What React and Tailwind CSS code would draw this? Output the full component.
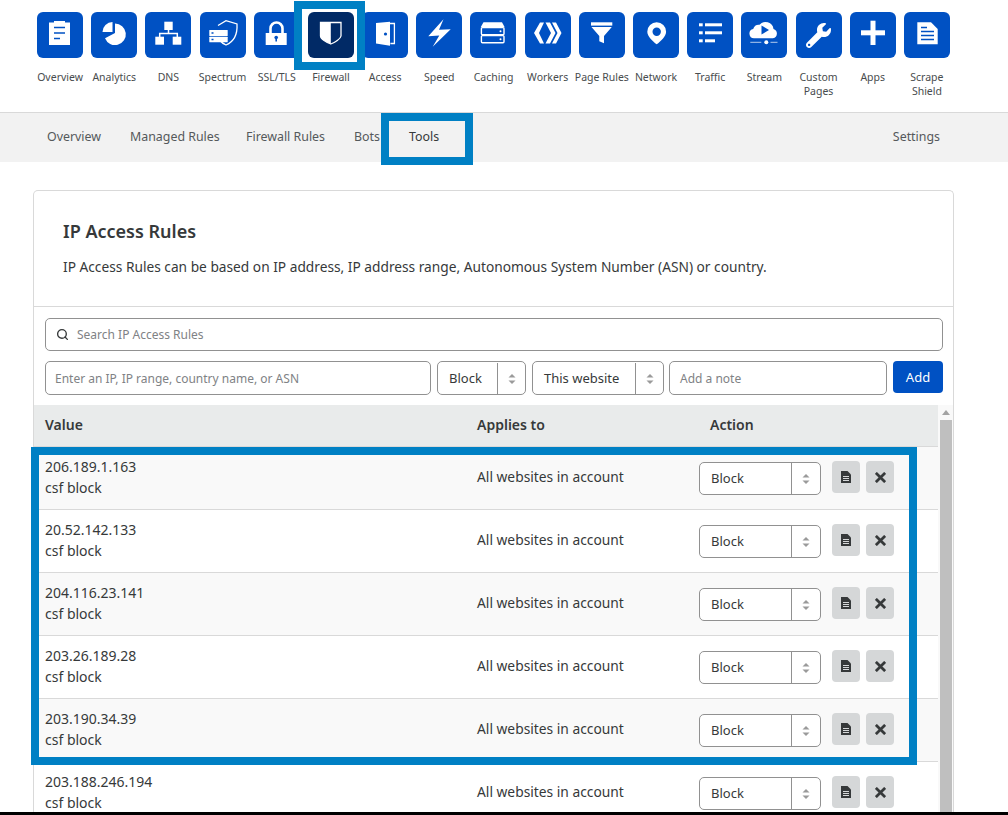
import React from 'react'
import { Search } from 'lucide-react'
import { FaWrench } from 'react-icons/fa'

const blue = '#0051c3'

function Glyph({ children }) {
  return (
    <svg viewBox="0 0 46 46" className="w-[46px] h-[46px]" fill="#fff">
      {children}
    </svg>
  )
}

const tabs = [
  {
    label: 'Overview',
    icon: (
      <Glyph>
        <rect x="12" y="10.5" width="21" height="22.5" />
        <rect x="17" y="9" width="11" height="3" />
        <path d="M17 15.500h11M17 21h11M17 26.500h6" stroke={blue} strokeWidth="1.600" />
      </Glyph>
    ),
  },
  {
    label: 'Analytics',
    icon: (
      <Glyph>
        <path d="M24 11.500A10.800 10.800 0 1 1 14 26.300L24 21z" />
        <path d="M21.500 10v10h-10A10 10 0 0 1 21.500 10z" />
      </Glyph>
    ),
  },
  {
    label: 'DNS',
    icon: (
      <Glyph>
        <rect x="19.300" y="9.700" width="8.400" height="8.300" />
        <rect x="10.300" y="24.700" width="8.700" height="8" />
        <rect x="27.700" y="24.700" width="8.600" height="8" />
        <path d="M23.500 18v3.500M14.700 25v-3.500h17.600V25" fill="none" stroke="#fff" strokeWidth="1.500" />
      </Glyph>
    ),
  },
  {
    label: 'Spectrum',
    icon: (
      <Glyph>
        <path d="M18 13.500L26 8.700l11 3.300c.5 9-1.500 17-11 21-2.500-1-4.500-2.500-6-4.500" fill="none" stroke="#fff" strokeWidth="1.300" />
        <rect x="9.300" y="18" width="18.400" height="6" rx=".5" />
        <rect x="9.300" y="24.800" width="18.400" height="5.500" rx=".5" />
        <path d="M11.500 21h2M11.500 27.500h2" stroke={blue} strokeWidth="1.300" />
      </Glyph>
    ),
  },
  {
    label: 'SSL/TLS',
    icon: (
      <Glyph>
        <path d="M16.500 21.500v-5a6 6 0 0 1 12 0v5" fill="none" stroke="#fff" strokeWidth="2.600" />
        <rect x="11.700" y="21" width="21" height="12" />
        <circle cx="22.200" cy="25.500" r="1.800" fill={blue} />
        <rect x="21.400" y="26" width="1.600" height="3.500" fill={blue} />
      </Glyph>
    ),
  },
  {
    label: 'Firewall',
    active: true,
    icon: (
      <Glyph>
        <path d="M12.500 10.500h20.500v13.500c-.5 3-6 6.500-10.200 8-4.300-1.500-10.300-5-10.300-8z" fill="none" stroke="#fff" strokeWidth="1.300" />
        <path d="M12.500 10.500h10.300v21.500c-4.300-1.500-10.300-5-10.300-8z" />
      </Glyph>
    ),
  },
  {
    label: 'Access',
    icon: (
      <Glyph>
        <path d="M25 11.500h7.400v20h-4" fill="none" stroke="#fff" strokeWidth="1.300" />
        <path d="M14 11l14-1.300v24L14 31.500z" />
        <circle cx="23.500" cy="22" r="1.600" fill={blue} />
      </Glyph>
    ),
  },
  {
    label: 'Speed',
    icon: (
      <Glyph>
        <path d="M27.500 7.300L12.300 24.300l11-.8L16.700 34.700l18-17.500-11.700.5z" />
      </Glyph>
    ),
  },
  {
    label: 'Caching',
    icon: (
      <Glyph>
        <path d="M13.500 10.300h18.500l2.700 5H10.700z" />
        <rect x="11.400" y="15.600" width="22.600" height="7.200" rx="1" fill="none" stroke="#fff" strokeWidth="1.400" />
        <rect x="11.400" y="23.600" width="22.600" height="7.200" rx="1" fill="none" stroke="#fff" strokeWidth="1.400" />
        <circle cx="30.500" cy="19.200" r="1" />
        <circle cx="30.500" cy="27.200" r="1" />
      </Glyph>
    ),
  },
  {
    label: 'Workers',
    icon: (
      <Glyph>
        <path d="M9 21l6-10.500h4L14 21l5 10.500h-4z" />
        <path d="M20.500 10.500H25L30.500 21 25 31.500h-4.500L26 21z" />
        <path d="M27 10.500h4L36.500 21 31 31.500h-4L32.500 21z" />
      </Glyph>
    ),
  },
  {
    label: 'Page Rules',
    icon: (
      <Glyph>
        <rect x="12" y="10.300" width="21.300" height="3.300" />
        <path d="M12.500 15h20.300l-7.800 9v7.300l-4.700-2V24z" />
      </Glyph>
    ),
  },
  {
    label: 'Network',
    icon: (
      <Glyph>
        <path fillRule="evenodd" d="M23.700 10.300a9.400 9.400 0 0 1 9.400 9.400c0 4.500-5.600 9.800-9.400 12.600-3.800-2.800-9.400-8.100-9.400-12.600a9.400 9.400 0 0 1 9.400-9.400zm0 5.200a4.200 4.200 0 1 0 0 8.400 4.200 4.200 0 0 0 0-8.400z" />
      </Glyph>
    ),
  },
  {
    label: 'Traffic',
    icon: (
      <Glyph>
        <rect x="12" y="11.300" width="3.700" height="3" />
        <rect x="18" y="11.300" width="17" height="3" />
        <rect x="12" y="19.300" width="3.700" height="3" />
        <rect x="18" y="19.300" width="17" height="3" />
        <rect x="12" y="27.300" width="3.700" height="3" />
        <rect x="18" y="27.300" width="10" height="3" />
      </Glyph>
    ),
  },
  {
    label: 'Stream',
    icon: (
      <Glyph>
        <path d="M13 26.300a4.700 4.700 0 0 1-.8-9.300 6 6 0 0 1 6.300-4.200A8 8 0 0 1 32.500 17a4.800 4.800 0 0 1-.5 9.300z" />
        <path d="M20.500 13.500v9l7.500-4.500z" fill={blue} />
        <path d="M9.300 30.300h11M29.500 30.300h7" stroke="#fff" strokeOpacity=".7" strokeWidth="1" />
        <circle cx="25.300" cy="30.300" r="2" />
      </Glyph>
    ),
  },
  {
    label: 'Custom Pages',
    icon: (
      <div className="flex items-center justify-center w-[46px] h-[46px] text-white">
        <FaWrench size={25} />
      </div>
    ),
  },
  {
    label: 'Apps',
    icon: (
      <Glyph>
        <rect x="20.500" y="8.700" width="5" height="24.300" />
        <rect x="11" y="18.300" width="24" height="5" />
      </Glyph>
    ),
  },
  {
    label: 'Scrape Shield',
    icon: (
      <Glyph>
        <path d="M13.300 10.300h13.700l6.700 6.700v15.300H13.300z" />
        <path d="M17 19.500h13M17 23.500h13M17 27.500h13M17 15.500h6" stroke={blue} strokeWidth="1.500" />
      </Glyph>
    ),
  },
]

const subTabs = [
  { label: 'Overview', width: 'w-[83px]' },
  { label: 'Managed Rules', width: 'w-[116px]' },
  { label: 'Firewall Rules', width: 'w-[108px]' },
  { label: 'Bots', width: 'w-[55px]' },
]

const rules = ['206.189.1.163', '20.52.142.133', '204.116.23.141', '203.26.189.28', '203.190.34.39', '203.188.246.194']

function Stepper() {
  return (
    <svg viewBox="0 0 8 12" className="w-[8px] h-[12px]" fill="#9a9a9a">
      <path d="M4 1L7.500 4.500H.5z" />
      <path d="M4 11L.5 7.500h7z" />
    </svg>
  )
}

function SelectBox({ label, className, labelWidth }) {
  return (
    <div className={`flex items-stretch bg-white border border-[#919191] rounded-[5px] text-[13px] text-[#36393a] ${className}`}>
      <div className={`flex items-center pl-[11px] border-r border-[#919191] ${labelWidth}`}>{label}</div>
      <div className="flex flex-1 items-center justify-center">
        <Stepper />
      </div>
    </div>
  )
}

function Row({ ip, shaded }) {
  return (
    <div className={`flex h-[63px] border-b border-[#d9d9d9] ${shaded ? 'bg-[#f9f9f9]' : 'bg-white'}`}>
      <div className="w-[443px] pl-[11px] pt-[9px] leading-[21px]">
        <div>{ip}</div>
        <div>csf block</div>
      </div>
      <div className="w-[222px] pt-[19px] text-[13.8px] leading-[21px]">All websites in account</div>
      <div className="flex items-start pt-[15px]">
        <SelectBox label="Block" className="w-[122px] h-[33px]" labelWidth="w-[92px]" />
        <button className="flex items-center justify-center w-[28px] h-[32px] ml-[11px] -mt-px rounded-[4px] bg-[#d5d7d8]">
          <svg viewBox="0 0 10 12" className="w-[10px] h-[12px]">
            <path fill="#36393a" d="M0 0h6.500L10 3.500V12H0z" />
            <path stroke="#d5d7d8" strokeWidth="1" d="M2 5.500h6M2 7.500h6M2 9.500h6" />
          </svg>
        </button>
        <button className="flex items-center justify-center w-[28px] h-[32px] ml-[6px] -mt-px rounded-[4px] bg-[#d5d7d8]">
          <svg viewBox="0 0 10 10" className="w-[11px] h-[11px]">
            <path stroke="#36393a" strokeWidth="2.500" d="M.8.8l8.400 8.400M9.200.8L.8 9.200" />
          </svg>
        </button>
      </div>
    </div>
  )
}

export default function App() {
  return (
    <div className="relative h-[815px] overflow-hidden bg-white text-[#36393a] text-[14px] font-['Noto_Sans',sans-serif]">
      <div className="h-[113px] border-b border-[#d9d9d9] pl-[33px] pt-[12px]">
        <div className="grid w-[921px] grid-cols-[repeat(17,1fr)]">
          {tabs.map((t) => (
            <div key={t.label} className="flex flex-col items-center">
              <div className={`w-[46px] h-[46px] rounded-[6px] ${t.active ? 'bg-[#012a66]' : 'bg-[#0051c3]'}`}>{t.icon}</div>
              <div className="mt-[12px] w-[54px] text-center text-[10.5px] leading-[14px] text-[#484c4e] whitespace-pre-line">
                {t.label.includes(' ') && t.label !== 'Page Rules' ? t.label.replace(' ', '\n') : <span className="whitespace-nowrap -mx-2">{t.label}</span>}
              </div>
            </div>
          ))}
        </div>
      </div>

      <div className="flex h-[49px] items-center justify-between bg-[#f2f2f2] pb-[1px] pl-[47px] pr-[68px] text-[12.4px] text-[#55595b]">
        <div className="flex items-center">
          {subTabs.map((t) => (
            <div key={t.label} className={t.width}>{t.label}</div>
          ))}
          <div className="text-[#36393a]">Tools</div>
        </div>
        <div>Settings</div>
      </div>

      <div className="mx-[33px] mt-[28px] w-[921px] rounded-t-[5px] border border-b-0 border-[#d9d9d9]">
        <div className="h-[116px] border-b border-[#d9d9d9] pl-[29px] pt-[27px]">
          <h2 className="text-[18px] leading-[26px] font-semibold">IP Access Rules</h2>
          <p className="mt-[13px] text-[13.73px] leading-[20px]">
            IP Access Rules can be based on IP address, IP address range, Autonomous System Number (ASN) or country.
          </p>
        </div>

        <div className="pl-[11px] pr-[10px] pt-[11px] pb-[10px]">
          <div className="flex h-[33px] items-center rounded-[5px] border border-[#919191] pl-[10px] text-[12px] text-[#808285]">
            <Search size={13} strokeWidth={2.5} className="text-[#36393a]" />
            <span className="ml-[8px]">Search IP Access Rules</span>
          </div>
          <div className="mt-[10px] flex items-start">
            <div className="flex h-[34px] w-[386px] items-center rounded-[5px] border border-[#919191] pl-[9px] pt-px text-[12px] text-[#808285]">
              Enter an IP, IP range, country name, or ASN
            </div>
            <SelectBox label="Block" className="ml-[6px] w-[89px] h-[34px] pt-px" labelWidth="w-[60px]" />
            <SelectBox label="This website" className="ml-[6px] w-[132px] h-[34px] pt-px" labelWidth="w-[103px]" />
            <div className="ml-[5px] flex h-[34px] w-[218px] items-center rounded-[5px] border border-[#919191] pl-[10px] pt-px text-[12px] text-[#808285]">
              Add a note
            </div>
            <button className="ml-[6px] h-[32px] w-[50px] rounded-[4px] bg-[#0051c3] pt-px text-[13px] text-white">Add</button>
          </div>
        </div>

        <div className="flex">
          <div className="w-[904px]">
            <div className="flex h-[42px] items-center border-b border-[#d9d9d9] bg-[#e9ebeb] pb-[2px] pl-[11px] font-semibold">
              <div className="w-[432px]">Value</div>
              <div className="w-[233px]">Applies to</div>
              <div>Action</div>
            </div>
            {rules.map((ip, i) => (
              <Row key={ip} ip={ip} shaded={i % 2 === 0} />
            ))}
          </div>
          <div className="flex w-[15px] flex-col items-center bg-[#f9f9f9]">
            <div className="flex h-[15px] w-full items-center justify-center">
              <svg viewBox="0 0 8 5" className="w-[8px] h-[5px]" fill="#a3a3a3">
                <path d="M4 0l4 5H0z" />
              </svg>
            </div>
            <div className="h-[400px] w-[12px] bg-[#bfbfbf]" />
          </div>
        </div>
      </div>

      {/* annotation boxes from the screenshot */}
      <div className="absolute left-[294px] top-[1px] h-[69px] w-[71px] border-[8px] border-[#0080c4]" />
      <div className="absolute left-[381px] top-[113px] h-[52px] w-[92px] border-[8px] border-[#0080c4]" />
      <div className="absolute left-[31px] top-[447px] h-[318px] w-[886px] border-[8px] border-[#0080c4]" />
      <div className="absolute bottom-0 left-0 h-[3px] w-full bg-black" />
    </div>
  )
}
